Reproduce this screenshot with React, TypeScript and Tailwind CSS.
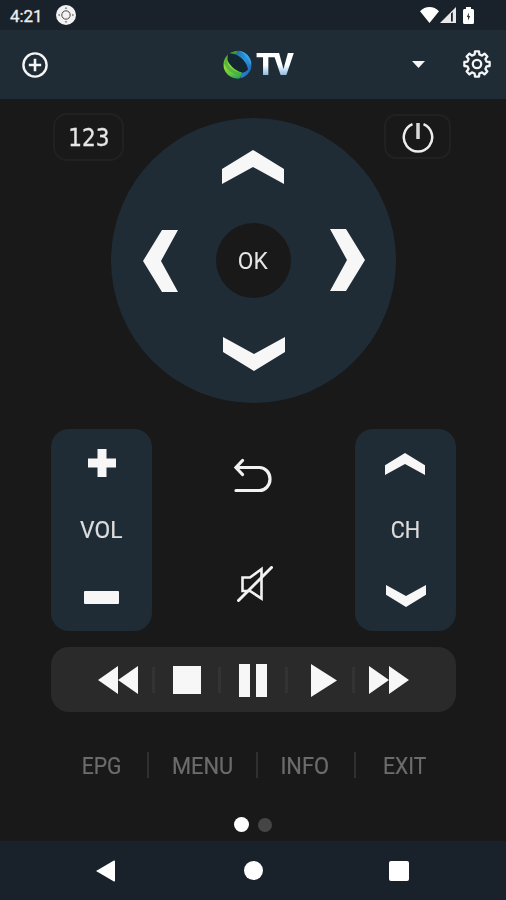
import React from 'react';

type Direction = 'up' | 'down' | 'left' | 'right';

const CHEVRONS: Record<Direction, string> = {
  up: '0,19 31,0 62,19 62,34 31,17 0,34',
  down: '0,0 31,17 62,0 62,15 31,34 0,15',
  left: '19,0 35,0 18,31 35,62 19,62 0,31',
  right: '0,0 16,0 35,31 16,62 0,62 17,31',
};

// Eight teeth: each one is [angle in degrees, radius] around the tooth's axis
const TOOTH = [[-14, 9.8], [-9, 12.8], [9, 12.8], [14, 9.8]];
const GEAR_POINTS = Array.from({ length: 8 }, (_, i) =>
  TOOTH.map(([angle, radius]) => {
    const a = ((i * 45 + angle) * Math.PI) / 180;
    return `${(14 + radius * Math.sin(a)).toFixed(2)},${(14 - radius * Math.cos(a)).toFixed(2)}`;
  }).join(' ')
).join(' ');

function Chevron({ direction, className }: { direction: Direction; className: string }) {
  const vertical = direction === 'up' || direction === 'down';
  return (
    <svg
      viewBox={vertical ? '0 0 62 34' : '0 0 35 62'}
      preserveAspectRatio="none"
      className={className}
      fill="currentColor"
    >
      <polygon points={CHEVRONS[direction]} />
    </svg>
  );
}

function StatusBar() {
  return (
    <div className="h-[30px] shrink-0 bg-[#19222a] flex items-center pl-[10px] pr-[32px]">
      <span className="w-[46px] pt-px text-[17px] leading-[30px] tracking-[-0.1px] text-[#eeeeee] [-webkit-text-stroke:0.3px]">4:21</span>
      <svg className="w-5 h-5" viewBox="0 0 20 20">
        <circle cx="10" cy="10" r="10" fill="#f2f2f2" />
        <circle cx="10" cy="10" r="4.2" fill="none" stroke="#444" strokeWidth="1" />
        <path
          d="M8.7 3.5 10 2.2l1.3 1.3zM8.7 16.5l1.3 1.3 1.3-1.3zM3.5 8.7 2.2 10l1.3 1.3zM16.5 8.7l1.3 1.3-1.3 1.3z"
          fill="#333"
        />
      </svg>
      <div className="flex items-center ml-auto">
        <svg className="w-[19px] h-4" viewBox="0 0 19 16" fill="#fff">
          <path d="M9.5 16 0 4.3C2.5 1.5 6 0 9.5 0S16.5 1.5 19 4.3z" />
        </svg>
        <svg className="w-4 h-4 ml-px" viewBox="0 0 16 16">
          <path d="M0 16 16 0v16z" fill="#e8e8e8" />
          <path d="M11 6.5v8h1.8V5z" fill="#19222a" />
        </svg>
        <svg className="w-[11px] h-[17px] ml-[7px]" viewBox="0 0 11 17">
          <path d="M3 0h5v2h1.500Q11 2 11 3.500v12Q11 17 9.500 17h-8Q0 17 0 15.500v-12Q0 2 1.500 2H3z" fill="#fff" />
          <path d="M5.800 5.500 3.800 10H5v3.500L7.200 9H5.800z" fill="#333" />
        </svg>
      </div>
    </div>
  );
}

function Logo() {
  return (
    <div className="flex items-center">
      <svg className="w-[29px] h-[30px]" viewBox="0 0 29 30">
        <defs>
          <linearGradient id="leaf" x1="0.3" y1="0" x2="0.5" y2="1">
            <stop offset="0" stopColor="#35902f" />
            <stop offset="0.45" stopColor="#93dc3c" />
            <stop offset="0.75" stopColor="#6cc93c" />
            <stop offset="1" stopColor="#25a35c" />
          </linearGradient>
          <linearGradient id="sea" x1="0" y1="0" x2="1" y2="1">
            <stop offset="0" stopColor="#1c6ea8" />
            <stop offset="0.45" stopColor="#2c95df" />
            <stop offset="1" stopColor="#1c52a6" />
          </linearGradient>
          <clipPath id="globe">
            <circle cx="14.5" cy="14.700" r="14" />
          </clipPath>
        </defs>
        <g clipPath="url(#globe)">
          <rect width="29" height="30" fill="#132733" />
          <path d="M5 2 4.500 10C7 16 12 20.500 19 22.500L16.500 30H0V4z" fill="url(#leaf)" />
          <path d="M5.500 3 15 0l-1.500 4.500z" fill="#3b9a35" />
          <path d="M15 0h14v30H17l1.500-7c3-.5 5-1.500 6.500-3.500C24 13.500 20 8 13 4.500z" fill="url(#sea)" />
          <path d="M15 .5c6 2.500 10.500 8 12 15l1.500-3C26.500 5.500 21.500 1 15 .5z" fill="#45b5ee" opacity=".55" />
          <path d="M1 13c2.500 7 8 11.500 16.500 12l.5-2C10.500 21.500 5.500 17.500 3.500 10z" fill="#43ad3d" opacity=".7" />
        </g>
      </svg>
      <span className="ml-[4px] pr-1 text-[31px] leading-8 font-black tracking-[-2.5px] bg-gradient-to-b from-white from-50% to-[#5c9bd3] to-95% bg-clip-text text-transparent">
        TV
      </span>
    </div>
  );
}

function Header() {
  return (
    <header className="h-[69px] shrink-0 bg-[#1f2b35] flex items-center pl-[22px] pr-[15px] text-[#f5f5f5]">
      <svg className="w-[26px] h-[26px] mr-[175px]" viewBox="0 0 26 26" fill="none" stroke="currentColor" strokeWidth="2.400">
        <circle cx="13" cy="13" r="11.600" />
        <path d="M13 6.800v12.400M6.800 13h12.400" strokeWidth="2.600" />
      </svg>
      <Logo />
      <svg className="w-[13px] h-[7px] ml-auto mr-[38px]" viewBox="0 0 13 7" fill="currentColor">
        <path d="M0 0h13L6.500 7z" />
      </svg>
      <svg className="w-[28px] h-[28px] -mt-px" viewBox="0 0 28 28" fill="none" stroke="currentColor" strokeWidth="2.300" strokeLinejoin="round">
        <polygon points={GEAR_POINTS} />
        <circle cx="14" cy="14" r="4.200" />
      </svg>
    </header>
  );
}

function DPad() {
  return (
    <div className="w-[285px] h-[285px] mt-[19px] -ml-[13px] shrink-0 rounded-full bg-[#1f2c36] flex flex-col items-center pt-8">
      <Chevron direction="up" className="w-[62px] h-[34px] mr-px" />
      <div className="flex items-center mt-[39px]">
        <Chevron direction="left" className="w-[35px] h-[62px] mr-[38px]" />
        <div className="w-[75px] h-[75px] rounded-full bg-[#191919] flex items-center justify-center">
          <span className="text-[24px] text-[#e6e6e6] scale-x-95">OK</span>
        </div>
        <Chevron direction="right" className="w-[35px] h-[62px] ml-[39px] -mt-[2px]" />
      </div>
      <Chevron direction="down" className="w-[62px] h-[34px] mt-[39px] ml-px" />
    </div>
  );
}

function TopControls() {
  return (
    <div className="flex items-start pl-[53px]">
      <div className="w-[71px] h-[48px] mt-[14px] shrink-0 rounded-[14px] border-2 border-[#212121] flex items-center justify-center">
        <span className="mt-px ml-px font-['DejaVu_Sans',sans-serif] text-[24px] leading-none text-[#e6e6e6] scale-x-90 [-webkit-text-stroke:0.3px]">
          123
        </span>
      </div>
      <DPad />
      <div className="w-[67px] h-[45px] mt-[15px] -ml-[12px] shrink-0 rounded-[12px] border-2 border-[#212121] flex items-center justify-center">
        <svg className="w-8 h-8" viewBox="0 0 32 32" fill="none" stroke="#ededed" strokeWidth="2.500">
          <path d="M10.500 3.200A14.200 14.200 0 1 0 21.500 3.200" />
          <path d="M16 2v16" strokeWidth="3.500" stroke="#d8d8d8" />
        </svg>
      </div>
    </div>
  );
}

function MiddleControls() {
  return (
    <div className="flex mt-[26px] pl-[51px]">
      <div className="w-[101px] h-[202px] rounded-[18px] bg-[#1f2c36] flex flex-col items-center">
        <svg className="w-7 h-7 mt-5" viewBox="0 0 28 28" fill="currentColor">
          <path d="M9.500 0h9v9.500H28v9h-9.500V28h-9v-9.500H0v-9h9.500z" />
        </svg>
        <span className="mt-[35px] text-[24px] leading-9 scale-x-[0.95] text-[#dddddd] [-webkit-text-stroke:0.2px]">VOL</span>
        <div className="w-[35px] h-[13px] mt-[43px] rounded-[1px] bg-[#f7f7f7]" />
      </div>
      <div className="w-[203px] flex flex-col items-center">
        <svg className="w-[38px] h-9 mt-[29px] mr-[2px]" viewBox="0 0 38 36" fill="none" stroke="#f2f2f2" strokeWidth="3.200" strokeLinecap="round">
          <path d="M2.500 9.500h23a10.500 11.500 0 0 1 0 23H2" />
          <path d="M8.500 2.500 2 9.500l6.500 7" />
        </svg>
        <svg className="w-9 h-9 mt-[72px] ml-[2px]" viewBox="0 0 36 36" fill="none" stroke="#f2f2f2" strokeWidth="2.600">
          <path d="M5.500 11.500H13L24.500 3v29.500L13 25H5.500z" />
          <path d="M1.500 34.500 34.500 1.500" strokeWidth="3" strokeLinecap="round" />
        </svg>
      </div>
      <div className="w-[101px] h-[202px] rounded-[18px] bg-[#1f2c36] flex flex-col items-center">
        <Chevron direction="up" className="w-10 h-[22px] mt-6 mr-px" />
        <span className="mt-[37px] text-[24px] leading-9 scale-x-90 text-[#dddddd] [-webkit-text-stroke:0.2px]">CH</span>
        <Chevron direction="down" className="w-10 h-[22px] mt-[37px]" />
      </div>
    </div>
  );
}

function PanelDivider() {
  return <div className="w-[3px] h-[26px] shrink-0 bg-[#333333]" />;
}

function TransportBar() {
  return (
    <div className="w-[405px] h-[65px] mt-4 ml-[51px] rounded-[18px] bg-[#2a2a2a] flex items-center pl-[47px] pt-px">
      <svg className="w-10 h-7" viewBox="0 0 40 28" fill="currentColor">
        <path d="M0 14 20 0v14L40 0v28L20 14v14z" />
      </svg>
      <div className="w-[14px]" />
      <PanelDivider />
      <div className="w-7 h-7 ml-[18px] mr-[17px] bg-[#f7f7f7]" />
      <PanelDivider />
      <div className="flex gap-[6px] ml-[18px] mr-[18px]">
        <div className="w-[11px] h-[33px] bg-[#f7f7f7]" />
        <div className="w-[11px] h-[33px] bg-[#f7f7f7]" />
      </div>
      <PanelDivider />
      <svg className="w-[26px] h-[33px] ml-[23px] mr-[15px]" viewBox="0 0 26 33" fill="currentColor">
        <path d="M0 0 26 16.500 0 33z" />
      </svg>
      <PanelDivider />
      <svg className="w-10 h-7 ml-[14px]" viewBox="0 0 40 28" fill="currentColor">
        <path d="M0 0l20 14V0l20 14-20 14V14L0 28z" />
      </svg>
    </div>
  );
}

function BottomMenu() {
  return (
    <div className="flex items-center h-[26px] mt-10 pl-[57px] text-[24px] text-[#6c6c6c] [-webkit-text-stroke:0.2px]">
      <div className="w-[90px] pt-[2px] flex justify-center"><span className="scale-x-[0.88]">EPG</span></div>
      <div className="w-[2px] h-[26px] bg-[#303030]" />
      <div className="w-[107px] pt-[2px] flex justify-center"><span className="scale-x-[0.91]">MENU</span></div>
      <div className="w-[2px] h-[26px] bg-[#303030]" />
      <div className="w-[94px] pt-[2px] flex justify-center"><span className="scale-x-[0.91]">INFO</span></div>
      <div className="w-[2px] h-[26px] ml-[2px] bg-[#303030]" />
      <div className="w-[98px] pt-[2px] flex justify-center"><span className="scale-x-[0.88]">EXIT</span></div>
    </div>
  );
}

function NavBar() {
  return (
    <nav className="h-[59px] shrink-0 bg-[#19222a] flex items-center pl-[96px] text-white">
      <svg className="w-[19px] h-[22px]" viewBox="0 0 19 22" fill="currentColor">
        <path d="M0 11 17.500.8Q19 0 19 1.500v19q0 1.500-1.500.7z" />
      </svg>
      <div className="w-[19px] h-[19px] ml-[129px] rounded-full bg-white" />
      <div className="w-5 h-5 ml-[126px] rounded-[2px] bg-white" />
    </nav>
  );
}

function App() {
  return (
    <div className="w-[506px] h-[900px] overflow-hidden flex flex-col bg-[#191919] text-[#f7f7f7] font-[Roboto,sans-serif]">
      <StatusBar />
      <Header />
      <main className="flex-1">
        <TopControls />
        <MiddleControls />
        <TransportBar />
        <BottomMenu />
        <div className="flex items-center gap-[9px] mt-[39px] pl-[234px]">
          <div className="w-[15px] h-[15px] rounded-full bg-white" />
          <div className="w-[14px] h-[14px] rounded-full bg-[#454545]" />
        </div>
      </main>
      <NavBar />
    </div>
  );
}

export default App;
